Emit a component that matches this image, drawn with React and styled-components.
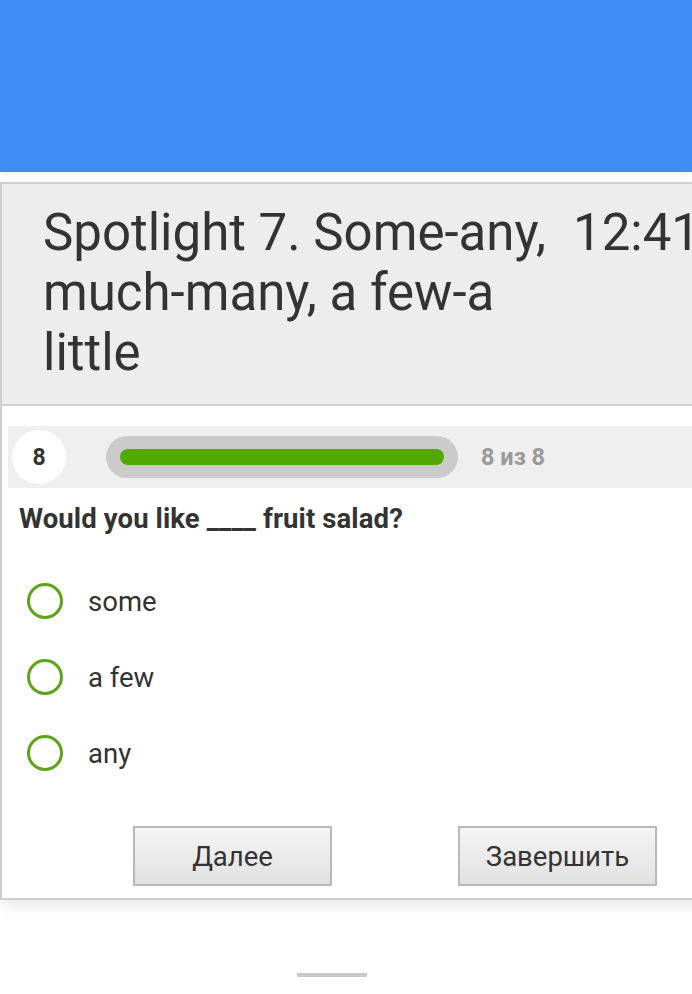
import React from "react";
import styled, { createGlobalStyle } from "styled-components";

const Global = createGlobalStyle`
  html, body { margin: 0; padding: 0; background: #fff; overflow: hidden; }
  body { font-family: Roboto, "Noto Sans", Arial, sans-serif; color: #333; }
`;

const Page = styled.div`
  width: 692px;
  height: 994px;
  overflow: hidden;
  display: flex;
  flex-direction: column;
`;

const TopBar = styled.div`
  height: 172px;
  flex: 0 0 172px;
  background: #3d8df5;
  box-shadow: 0 3px 8px rgba(0, 0, 0, 0.06);
`;

const Card = styled.div`
  margin-top: 10px;
  width: 740px;
  border: 2px solid #cfcfcf;
  border-right: none;
  margin-left: 0;
  background: #fff;
  box-shadow: 0 8px 14px rgba(0, 0, 0, 0.08);
  padding-bottom: 12px;
`;

const Header = styled.div`
  background: #ededed;
  border-bottom: 2px solid #cfcfcf;
  display: flex;
  align-items: flex-start;
  padding: 19px 0 21px 41px;
`;

const Title = styled.h1`
  margin: 0;
  width: 530px;
  flex: 0 0 530px;
  font-size: 51px;
  line-height: 60px;
  font-weight: 400;
  color: #333;
`;

const Timer = styled.div`
  font-size: 51px;
  line-height: 60px;
  color: #333;
  white-space: nowrap;
`;

const ProgressRow = styled.div`
  margin: 20px 0 0 6px;
  height: 62px;
  background: #efefef;
  display: flex;
  align-items: center;
  padding-left: 4px;
`;

const Bubble = styled.div`
  width: 54px;
  height: 54px;
  border-radius: 50%;
  background: #fff;
  display: flex;
  align-items: center;
  justify-content: center;
  font-weight: 700;
  font-size: 23px;
  color: #333;
`;

const Track = styled.div`
  margin-left: 40px;
  width: 352px;
  height: 42px;
  border-radius: 21px;
  background: #cbcbcb;
  display: flex;
  align-items: center;
  padding: 0 14px;
  box-sizing: border-box;
`;

const Fill = styled.div`
  height: 16px;
  border-radius: 8px;
  background: #51a800;
`;

const Counter = styled.div`
  margin-left: 23px;
  font-size: 23.5px;
  font-weight: 700;
  color: #9a9a9a;
`;

const Question = styled.div`
  margin: 16px 0 0 17px;
  font-size: 27.5px;
  line-height: 30px;
  font-weight: 700;
  letter-spacing: 0.1px;
  color: #333;
`;

const Options = styled.div`
  margin-top: 49px;
  display: flex;
  flex-direction: column;
  gap: 40px;
  padding-left: 25px;
`;

const Option = styled.label`
  display: flex;
  align-items: center;
  gap: 25px;
  height: 36px;
  font-size: 27.5px;
  color: #333;
`;

const Radio = styled.span`
  width: 36px;
  height: 36px;
  box-sizing: border-box;
  border-radius: 50%;
  border: 3px solid #5ea31b;
  flex: 0 0 36px;
`;

const Buttons = styled.div`
  display: flex;
  gap: 126px;
  padding-left: 131px;
  margin-top: 55px;
`;

const Button = styled.button`
  width: 199px;
  height: 60px;
  border: 2px solid #b9b9b9;
  border-radius: 0;
  background: linear-gradient(#f5f5f5, #e1e1e1);
  font-family: Roboto, "Noto Sans", Arial, sans-serif;
  font-size: 27.5px;
  color: #333;
  padding: 0;
`;

const Handle = styled.div`
  margin: 73px auto 0;
  width: 70px;
  height: 4px;
  background: #c8c8c8;
  position: relative;
  left: -14px;
`;

export default function App() {
  const options = ["some", "a few", "any"];
  return (
    <Page>
      <Global />
      <TopBar />
      <Card>
        <Header>
          <Title>Spotlight 7. Some-any, much-many, a few-a little</Title>
          <Timer>12:41</Timer>
        </Header>
        <ProgressRow>
          <Bubble>8</Bubble>
          <Track>
            <Fill style={{ width: "100%" }} />
          </Track>
          <Counter>8 из 8</Counter>
        </ProgressRow>
        <Question>Would you like ____ fruit salad?</Question>
        <Options>
          {options.map((o) => (
            <Option key={o}>
              <Radio />
              {o}
            </Option>
          ))}
        </Options>
        <Buttons>
          <Button>Далее</Button>
          <Button>Завершить</Button>
        </Buttons>
      </Card>
      <Handle />
    </Page>
  );
}
